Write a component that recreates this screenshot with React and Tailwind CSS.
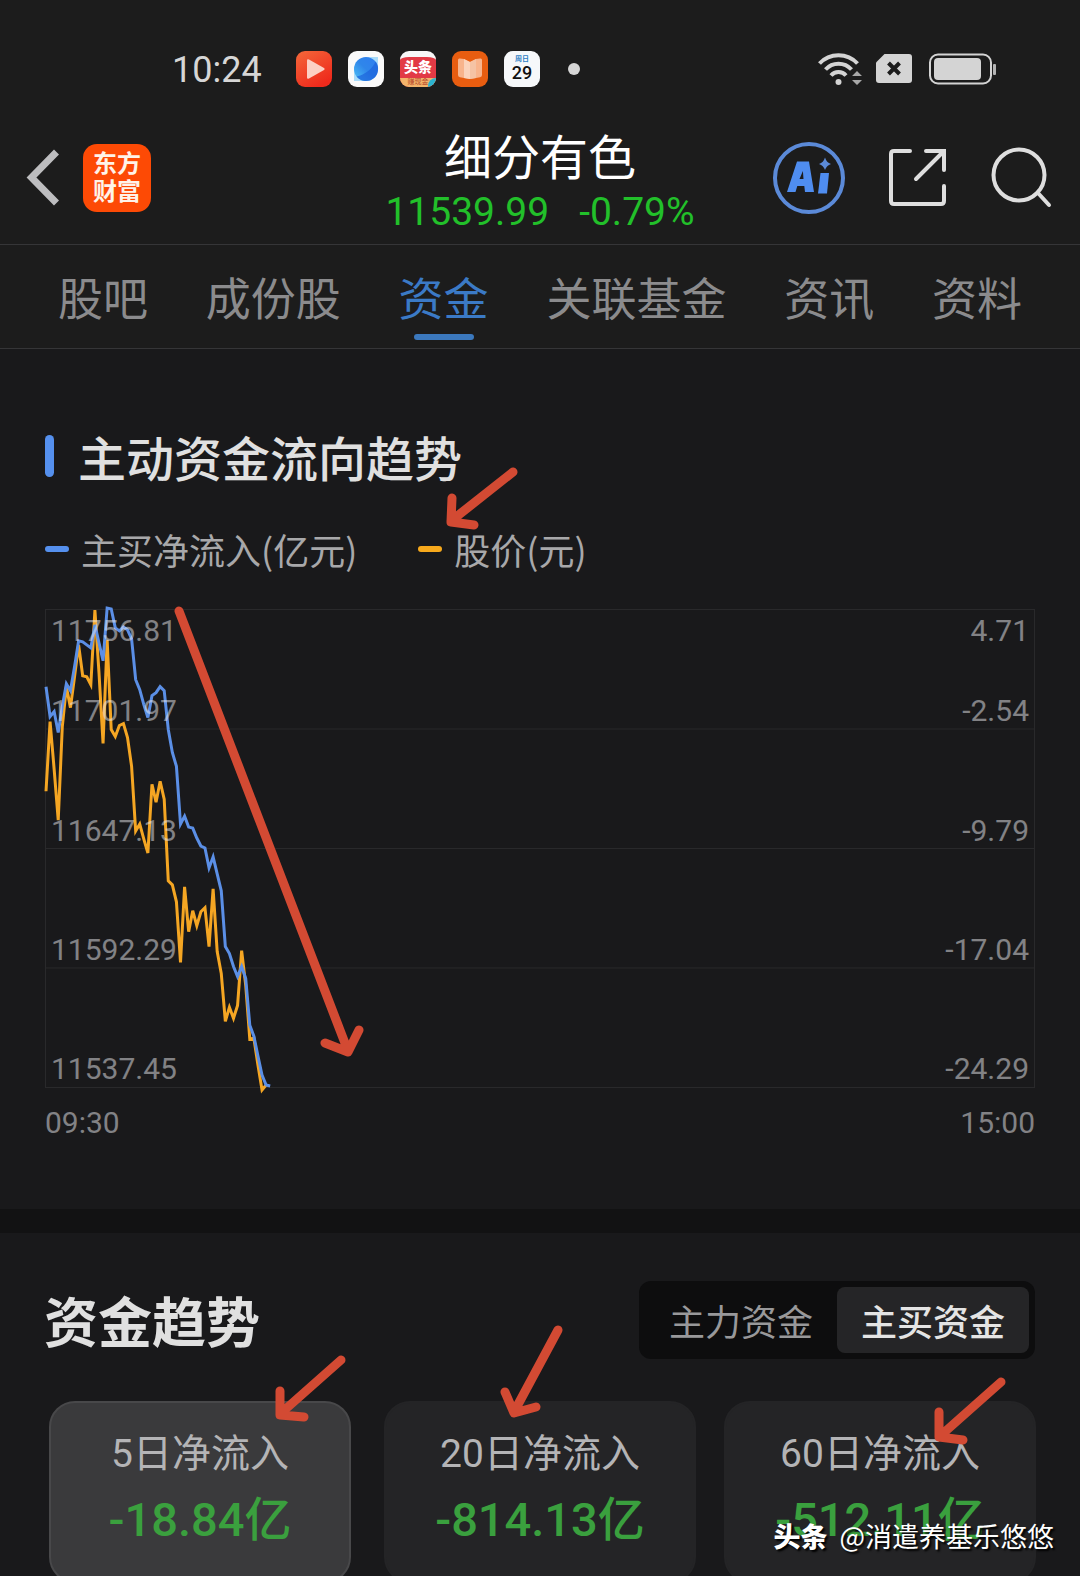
import { useState } from "react";

const tabs = ["股吧", "成份股", "资金", "关联基金", "资讯", "资料"];

// one value per minute from 09:30, measured from the top of the chart
const inflow = [
  77, 107, 102, 123, 97, 74, 81, 57, 31, 32, 35, 38, 15, 33, 51, -2, -1, 18,
  21, 17, 20, 29, 70, 80, 95, 108, 86, 83, 77, 81, 120, 143, 157, 215, 207,
  218, 219, 229, 237, 239, 259, 248, 265, 282, 338, 345, 358, 368, 358, 370,
  417, 428, 448, 467, 477, 478,
];
const price = [
  182, 112, 160, 211, 117, 77, 98, 67, 35, 66, 67, 75, 0, 63, 134, 30, 120,
  127, 116, 114, 128, 157, 222, 215, 230, 244, 175, 193, 172, 190, 272, 276,
  293, 354, 278, 323, 302, 317, 303, 299, 338, 280, 343, 365, 413, 399, 410,
  397, 342, 377, 431, 430, 457, 482, 477,
];

const toPoints = (data) => data.map((y, i) => `${i * 4.08},${y}`).join(" ");

const rows = [
  ["11701.97", "-2.54"],
  ["11647.13", "-9.79"],
  ["11592.29", "-17.04"],
  ["11537.45", "-24.29"],
];

const cards = [
  { label: "5日净流入", value: "-18.84亿" },
  { label: "20日净流入", value: "-814.13亿" },
  { label: "60日净流入", value: "-512.11亿" },
];

function StatusBar() {
  return (
    <div className="flex items-center justify-between h-[42px] mt-12 pl-[172px] pr-[83px]">
      <div className="flex items-center">
        <span className="pt-[2px] text-[36px] leading-[42px] text-[#d6d6d6] w-[124px]">10:24</span>
        <div className="flex items-center gap-4">
          <svg className="size-9" viewBox="0 0 36 36">
            <defs>
              <linearGradient id="video" x1="0" y1="0" x2="0.6" y2="1">
                <stop offset="0" stopColor="#f4683a" />
                <stop offset="1" stopColor="#ee2a1c" />
              </linearGradient>
            </defs>
            <rect width="36" height="36" rx="9" fill="url(#video)" />
            <path d="M11 9.5v17q0 2 2 1l15-8.500q1.500-1 0-2l-15-8.500q-2-1-2 1z" fill="#fcd0c4" />
          </svg>
          <svg className="size-9" viewBox="0 0 36 36">
            <defs>
              <linearGradient id="globe" x1="0" y1="1" x2="1" y2="0">
                <stop offset="0" stopColor="#4fc3f7" />
                <stop offset="0.5" stopColor="#2f86ea" />
                <stop offset="1" stopColor="#2f7df0" />
              </linearGradient>
            </defs>
            <rect width="36" height="36" rx="9" fill="#fafafa" />
            <path d="M6 30V18L18 30z" fill="#a9dcfa" />
            <path d="M30 6v11L19 6z" fill="#a9dcfa" />
            <circle cx="18" cy="18" r="12" fill="url(#globe)" />
            <path d="M8.500 25.500C17 24 25 17 27.500 10.500A12 12 0 0 1 8.500 25.500z" fill="#1c63dc" opacity="0.7" />
          </svg>
          <div className="relative flex flex-col items-center overflow-hidden size-9 rounded-[9px] bg-[#e23a45] border-t-[6px] border-[#f7f7f7]">
            <span className="text-[14px] leading-[21px] font-black text-white">头条</span>
            <span className="w-full text-center text-[7px] leading-[9px] bg-[#f3b46b] text-[#b5482a]">赚现金</span>
            <span className="absolute bottom-0 right-0 w-2 h-[9px] rounded-tl-full bg-[#2bb3cf]" />
          </div>
          <svg className="size-9" viewBox="0 0 36 36">
            <rect width="36" height="36" rx="9" fill="#e85d10" />
            <path d="M6 9q0-2 2-1.500L12 8l6 3 6-3 4-.5q2-.5 2 1.500v15q0 2-2 2.200L24 27l-6 1-6-1-4-.8q-2-.2-2-2.200z" fill="#f8b48c" />
            <path d="M12 8l6 3v17l-6-1z" fill="#fbd3bb" />
            <path d="M18 11l6-3v19l-6 1z" fill="#f5c3a4" />
          </svg>
          <div className="flex flex-col items-center pt-1 size-9 rounded-[9px] bg-[#f6f8fa]">
            <span className="text-[7px] leading-[9px] text-[#2f7fc4] font-bold">周日</span>
            <span className="text-[18px] leading-[18px] font-medium text-[#111]">29</span>
          </div>
          <span className="ml-3 size-3 rounded-full bg-[#d6d6d6]" />
        </div>
      </div>

      <div className="flex items-center">
        <svg className="w-[44px] h-9" viewBox="0 0 44 36" fill="none" stroke="#d4d4d4" strokeWidth="4">
          <path d="M1.500 12.500a26 26 0 0 1 38 0" />
          <path d="M7.500 18.500a17.500 17.500 0 0 1 26 0" />
          <path d="M13 24.500a10 10 0 0 1 15 0" />
          <circle cx="20.500" cy="31" r="3" fill="#d4d4d4" stroke="none" />
          <path d="M34 25l5-5 5 5zM34 29l5 5 5-5z" fill="#a8a8a8" stroke="none" />
        </svg>
        <svg className="ml-[14px] w-9 h-[30px]" viewBox="0 0 36 30">
          <path d="M8.500 0H33q3 0 3 3v23q0 3-3 3H3q-3 0-3-3V8.500z" fill="#d4d4d4" />
          <path d="M12.500 9l11 11M23.500 9l-11 11" stroke="#1c1c1c" strokeWidth="4" />
        </svg>
        <svg className="ml-4 w-[69px] h-8" viewBox="0 0 69 32" fill="none">
          <rect x="2" y="1.500" width="61" height="29" rx="8" stroke="#d4d4d4" strokeWidth="2" />
          <rect x="6" y="5" width="47" height="22" rx="4" fill="#d4d4d4" />
          <rect x="65" y="11" width="3" height="11" rx="1" fill="#b4b4b4" />
        </svg>
      </div>
    </div>
  );
}

function Header() {
  return (
    <div className="grid grid-cols-[1fr_auto_1fr] items-center h-[155px] px-7 pt-[22px] border-b border-[#353537]">
      <div className="flex items-center gap-6">
        <button aria-label="back">
          <svg className="w-[31px] h-[60px] overflow-visible" viewBox="0 0 31 60" fill="none" stroke="#bdbdbf" strokeWidth="7">
            <path d="M28.500 4L3.500 29.500 28.500 55" />
          </svg>
        </button>
        <div className="flex flex-col items-center justify-center size-[68px] rounded-[14px] bg-[#fd4a05] text-[24px] leading-[28px] font-bold text-[#fff3e8]">
          <span>东方</span>
          <span>财富</span>
        </div>
      </div>

      <div className="pt-2 text-center">
        <h1 className="text-[48px] leading-[56px] text-white font-['Noto_Sans_CJK_SC',sans-serif]">细分有色</h1>
        <div className="flex gap-[30px] mt-1 text-[39px] leading-[52px] text-[#22c02a]">
          <span>11539.99</span>
          <span>-0.79%</span>
        </div>
      </div>

      <div className="flex items-center justify-end gap-[41px]">
        <button aria-label="AI">
          <svg className="size-[74px]" viewBox="0 0 74 74" fill="none">
            <circle cx="37" cy="37" r="34" stroke="#5b8ad8" strokeWidth="4" />
            <path
              fillRule="evenodd"
              d="M15 51L25 20.500h12L42 51h-9l-.7-6h-7l-1.800 6zM27.500 38h4l-.6-8z"
              fill="#4f8df0"
            />
            <path d="M48.500 32h8.500l-2 20.500h-9z" fill="#4f8df0" />
            <path d="M53 16.500q1.500 5 6 6.500-4.500 1.500-6 6-1.500-4.500-6-6 4.500-1.500 6-6.500z" fill="#5b8ad8" />
          </svg>
        </button>
        <button aria-label="share">
          <svg className="size-[62px]" viewBox="0 0 62 62" fill="none" stroke="#dedede" strokeWidth="4" strokeLinecap="round">
            <path d="M23 4H7q-3 0-3 3v47q0 3 3 3h47q3 0 3-3V39" />
            <path d="M39 4h18v19M56 5L29 32" />
          </svg>
        </button>
        <button aria-label="search">
          <svg className="size-[62px]" viewBox="0 0 62 62" fill="none" stroke="#dedede" strokeWidth="4" strokeLinecap="round">
            <circle cx="29" cy="28" r="25.500" />
            <path d="M48 46l11 12" />
          </svg>
        </button>
      </div>
    </div>
  );
}

function Chart() {
  return (
    <div className="mt-[38px]">
      <div className="relative flex flex-col h-[479px] border border-[#29292b] text-[30px] leading-[36px] text-[#ececf0]/50">
        <svg
          className="absolute inset-0 w-full h-full overflow-visible"
          viewBox="0 0 989 479"
          preserveAspectRatio="none"
          fill="none"
          strokeWidth="3"
        >
          <path d="M0 119.500H989M0 239.500H989M0 359.500H989" stroke="#29292b" strokeWidth="1" />
          <polyline points={toPoints(price)} stroke="#f5a623" />
          <polyline points={toPoints(inflow)} stroke="#5b8fe6" />
        </svg>
        {rows.map(([left, right], i) => (
          <div key={left} className="relative flex flex-col justify-between flex-1 px-[5px] pt-[3px]">
            <div className="flex justify-between">
              {i === 0 && <span>11756.81</span>}
              {i === 0 && <span>4.71</span>}
            </div>
            <div className="flex justify-between">
              <span>{left}</span>
              <span>{right}</span>
            </div>
          </div>
        ))}
      </div>
      <div className="flex justify-between mt-[17px] text-[30px] leading-[36px] text-[#828285]">
        <span>09:30</span>
        <span>15:00</span>
      </div>
    </div>
  );
}

function Arrows() {
  return (
    <svg
      className="absolute top-0 left-0 w-[1080px] h-[1576px] pointer-events-none"
      viewBox="0 0 1080 1576"
      fill="none"
      stroke="#d34a33"
      strokeWidth="9"
      strokeLinecap="round"
      strokeLinejoin="round"
    >
      <path d="M513 472L451 521M452 498L451 522L474 525" />
      <path d="M179 611L348 1051M325 1043L348 1052L359 1030" />
      <path d="M341 1360L280 1414M280 1391L280 1415L304 1417" />
      <path d="M558 1330L514 1412M505 1392L514 1413L536 1407" />
      <path d="M1001 1382L939 1437M939 1412L939 1437L963 1440" />
    </svg>
  );
}

export default function App() {
  const [tab, setTab] = useState("资金");
  const [fund, setFund] = useState("主买资金");
  const [card, setCard] = useState(0);

  return (
    <div className="relative w-full h-screen overflow-hidden bg-[#19191b] font-['Roboto','Noto_Sans_CJK_SC',sans-serif]">
      <div className="flow-root bg-[#1c1c1c]">
        <StatusBar />
        <Header />
        <nav className="flex justify-between h-[104px] px-[58px] border-b border-[#353537]">
          {tabs.map((t) => (
            <button
              key={t}
              onClick={() => setTab(t)}
              className={
                t === tab
                  ? "flex flex-col items-center pt-[29px] text-[45px] leading-[54px] text-[#3b7ac6]"
                  : "flex flex-col items-center pt-[29px] text-[45px] leading-[54px] text-[#8b8b8d]"
              }>
              {t}
              {t === tab && <span className="mt-[6px] w-[60px] h-[6px] rounded-full bg-[#3b78bd]" />}
            </button>
          ))}
        </nav>
      </div>

      <section className="px-[45px] pt-[77px] pb-[68px]">
        <h2 className="flex items-center gap-6 text-[48px] leading-[60px] font-medium text-[#e0e0e0] font-['Noto_Sans_CJK_SC',sans-serif]">
          <span className="w-[9px] h-[42px] rounded-full bg-[#5590ee]" />
          主动资金流向趋势
        </h2>
        <div className="flex gap-[61px] mt-[41px] text-[36px] leading-[44px] text-[#a8a8aa] font-['Noto_Sans_CJK_SC',sans-serif]">
          <div className="flex items-center gap-3">
            <span className="w-6 h-[6px] rounded-full bg-[#5590ee]" />
            主买净流入(亿元)
          </div>
          <div className="flex items-center gap-3">
            <span className="w-6 h-[6px] rounded-full bg-[#f7a91c]" />
            股价(元)
          </div>
        </div>
        <Chart />
      </section>

      <div className="h-6 bg-[#121213]" />

      <section className="px-11 pt-12">
        <div className="flex items-center justify-between pr-px font-['Noto_Sans_CJK_SC',sans-serif]">
          <h2 className="text-[54px] leading-[72px] font-bold text-[#e0e0e0]">资金趋势</h2>
          <div className="flex p-[6px] rounded-xl bg-[#0d0d0e]">
            {["主力资金", "主买资金"].map((f) => (
              <button
                key={f}
                onClick={() => setFund(f)}
                className={
                  f === fund
                    ? "h-[66px] px-6 rounded-lg bg-[#252527] text-[36px] font-medium text-[#e4e4e4]"
                    : "h-[66px] px-6 rounded-lg text-[36px] text-[#98989a]"
                }>
                {f}
              </button>
            ))}
          </div>
        </div>

        <div className="grid grid-cols-3 gap-7 mt-[42px]">
          {cards.map((c, i) => (
            <button
              key={c.label}
              onClick={() => setCard(i)}
              className={
                i === card
                  ? "h-[182px] mx-[5px] pb-1 rounded-[26px] border-2 border-[#48484a] bg-[#3a3a3c]"
                  : "h-[182px] pb-1 rounded-[26px] border-2 border-[#242426] bg-[#242426]"
              }>
              <div className="text-[39px] leading-[52px] text-[#b4b4b6]">{c.label}</div>
              <div className="mt-2 text-[47px] leading-[64px] font-medium text-[#3aa03e]">{c.value}</div>
            </button>
          ))}
        </div>
      </section>

      <Arrows />

      <div className="absolute right-[26px] bottom-5 flex items-center gap-3 text-[27px] leading-[40px] text-white font-['Noto_Sans_CJK_SC',sans-serif] [text-shadow:2px_2px_2px_#000]">
        <span className="font-black">头条</span>
        <span>@消遣养基乐悠悠</span>
      </div>
    </div>
  );
}
